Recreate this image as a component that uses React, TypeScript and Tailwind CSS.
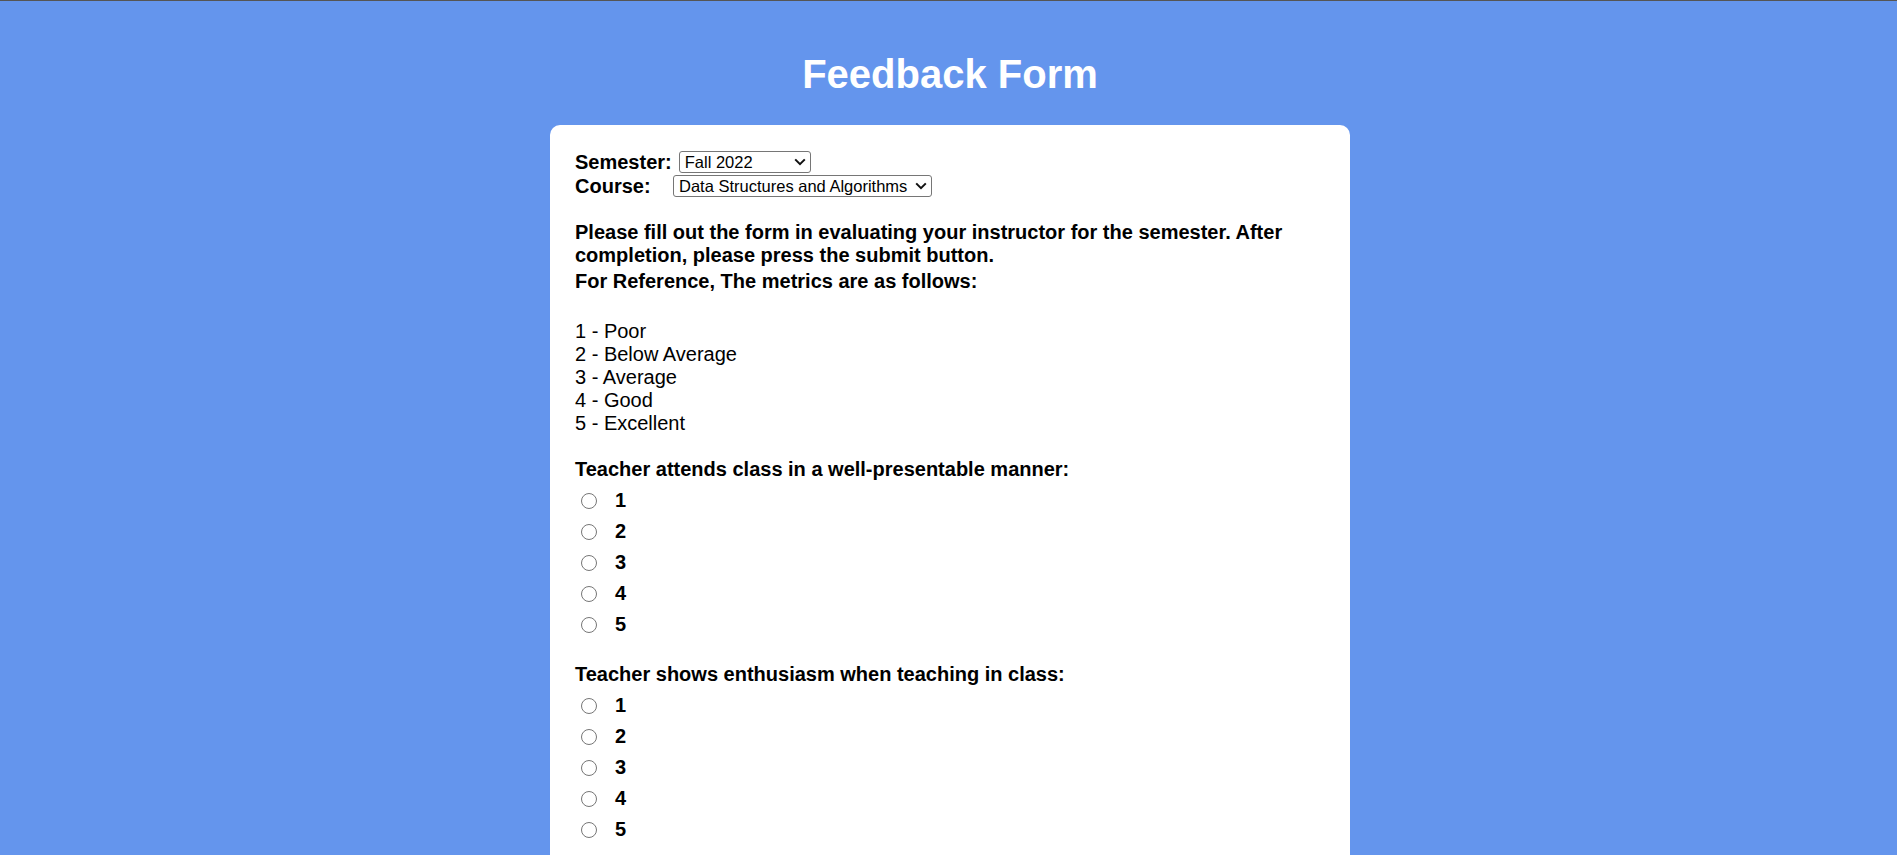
import { useState } from 'react';

const METRICS = ['1 - Poor', '2 - Below Average', '3 - Average', '4 - Good', '5 - Excellent'];

const QUESTIONS = [
  { id: 'presentable', text: 'Teacher attends class in a well-presentable manner:' },
  { id: 'enthusiasm', text: 'Teacher shows enthusiasm when teaching in class:' },
];

function Dropdown({
  value,
  onChange,
  options,
  className,
}: {
  value: string;
  onChange: (v: string) => void;
  options: string[];
  className: string;
}) {
  return (
    <div className={`relative h-[22px] ${className}`}>
      <select
        value={value}
        onChange={(e) => onChange(e.target.value)}
        className="block h-full w-full appearance-none rounded-[3px] border border-[#767676] bg-white pl-[5px] text-[16.5px] leading-[20px]"
      >
        {options.map((o) => (
          <option key={o}>{o}</option>
        ))}
      </select>
      <svg
        className="pointer-events-none absolute right-[5px] top-[7px]"
        width="12"
        height="8"
        viewBox="0 0 12 8"
        fill="none"
      >
        <path d="M1.2 1.4 6 6.2l4.8-4.8" stroke="#111" strokeWidth="2" />
      </svg>
    </div>
  );
}

function RatingGroup({ id, text }: { id: string; text: string }) {
  const [value, setValue] = useState<number | null>(null);

  return (
    <div className="mt-[23px]">
      <div className="font-bold leading-[23px]">{text}</div>
      <div className="mt-[4px] flex flex-col">
        {[1, 2, 3, 4, 5].map((n) => (
          <label key={n} className="flex h-[31px] items-center">
            <input
              type="radio"
              name={id}
              value={n}
              checked={value === n}
              onChange={() => setValue(n)}
              className="m-0 ml-[6px] h-4 w-4"
            />
            <span className="ml-[18px] font-bold leading-[23px]">{n}</span>
          </label>
        ))}
      </div>
    </div>
  );
}

export default function App() {
  const [semester, setSemester] = useState('Fall 2022');
  const [course, setCourse] = useState('Data Structures and Algorithms');

  return (
    <div
      className="min-h-screen border-t border-[#555555] bg-[#6495ed] pl-[3px] pt-[50px] text-[20px] text-black"
      style={{ fontFamily: '"Liberation Sans", Arial, sans-serif' }}
    >
      {/* 제목 */}
      <h1 className="text-center text-[40px] font-bold leading-[46px] text-white">Feedback Form</h1>

      {/* 카드 */}
      <div className="mx-auto mt-[28px] w-[800px] rounded-[10px] bg-white p-[25px]">
        <div className="flex h-[24px] items-center">
          <span className="font-bold leading-[23px]">Semester:</span>
          <Dropdown
            value={semester}
            onChange={setSemester}
            options={['Fall 2022', 'Spring 2023', 'Summer 2023']}
            className="ml-[7px] w-[132px]"
          />
        </div>
        <div className="flex h-[24px] items-center">
          <span className="w-[98px] font-bold leading-[23px]">Course:</span>
          <Dropdown
            value={course}
            onChange={setCourse}
            options={['Data Structures and Algorithms', 'Computer Programming 1', 'Discrete Mathematics']}
            className="w-[259px]"
          />
        </div>

        <p className="mt-[23px] font-bold leading-[23px]">
          Please fill out the form in evaluating your instructor for the semester. After completion, please press
          the submit button.
        </p>
        <p className="mt-[3px] font-bold leading-[23px]">For Reference, The metrics are as follows:</p>

        <div className="mt-[27px] leading-[23px]">
          {METRICS.map((m) => (
            <div key={m}>{m}</div>
          ))}
        </div>

        {QUESTIONS.map((q) => (
          <RatingGroup key={q.id} id={q.id} text={q.text} />
        ))}
      </div>
    </div>
  );
}
